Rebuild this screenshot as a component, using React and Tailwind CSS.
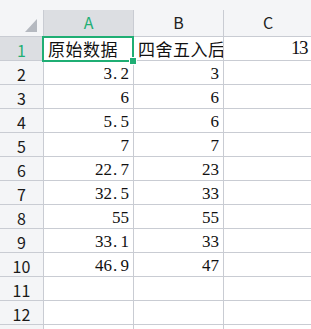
import React from "react";

function Num({ v }) {
  const chars = String(v).split("");
  return (
    <span className="whitespace-nowrap">
      {chars.map((c, i) =>
        c === "." ? (
          <span key={i} className="inline-block w-[8.5px] pl-[1px] text-left">.</span>
        ) : (
          <span key={i}>{c}</span>
        )
      )}
    </span>
  );
}

const rows = [
  ["原始数据", "四舍五入后", "13"],
  ["3.2", "3", ""],
  ["6", "6", ""],
  ["5.5", "6", ""],
  ["7", "7", ""],
  ["22.7", "23", ""],
  ["32.5", "33", ""],
  ["55", "55", ""],
  ["33.1", "33", ""],
  ["46.9", "47", ""],
  ["", "", ""],
  ["", "", ""],
  ["", "", ""],
];

const headFont = { fontFamily: '"Noto Sans CJK SC", "Noto Sans", sans-serif' };
const cellFont = { fontFamily: '"Liberation Serif", "Noto Sans CJK SC", serif' };

export default function App() {
  return (
    <div className="relative w-[311px] h-[329px] overflow-hidden bg-white">
      <div className="h-[10px] bg-[#f4f5f7]" />
      <div className="grid grid-cols-[44px_90px_90px_89px] w-[313px]">
        {/* header row */}
        <div className="h-[27px] bg-[#f4f5f7] border-r border-b border-[#c9ccd3] flex justify-end items-end pr-[6px] pb-[4px]">
          <svg width="12" height="13" viewBox="0 0 12 13">
            <polygon points="12,0 12,13 0,13" fill="#b5b9c0" />
          </svg>
        </div>
        {["A", "B", "C"].map((h, i) => (
          <div
            key={h}
            style={headFont}
            className={`h-[27px] border-r border-b border-[#c9ccd3] flex items-center justify-center text-[16px] leading-[16px] pb-[3px] ${
              i === 0 ? "bg-[#dcdee2] text-[#1fae74]" : "bg-[#f4f5f7] text-[#222]"
            }`}
          >
            {h}
          </div>
        ))}

        {rows.map((r, ri) => (
          <React.Fragment key={ri}>
            <div
              style={headFont}
              className={`h-[24px] border-r border-b border-[#c9ccd3] flex items-end justify-center text-[16px] leading-[16px] pb-[2px] ${
                ri === 0 ? "bg-[#dcdee2] text-[#1fae74]" : "bg-[#f4f5f7] text-[#1a1a1a]"
              }`}
            >
              {ri < 12 ? ri + 1 : null}
            </div>
            {r.map((v, ci) => {
              const isText = ri === 0 && ci < 2;
              const isBig = ri === 0 && ci === 2;
              return (
                <div
                  key={ci}
                  style={isText ? headFont : cellFont}
                  className={`h-[24px] border-r border-b border-[#c9ccd3] overflow-hidden flex items-end text-[#111] ${
                    isText
                      ? "justify-start pl-[4px] pb-[3px] tracking-[0.5px] text-[17px] leading-[17px]"
                      : isBig
                      ? "justify-end pr-[5px] pb-[3px] tracking-[-1.5px] text-[19px] leading-[19px]"
                      : "justify-end pr-[4px] pb-[2px] text-[17px] leading-[17px]"
                  }`}
                >
                  {isText ? <span className="whitespace-nowrap">{v}</span> : v ? <Num v={v} /> : null}
                </div>
              );
            })}
          </React.Fragment>
        ))}
      </div>

      {/* selection */}
      <div className="absolute left-[42px] top-[36px] w-[92px] h-[26px] border-2 border-[#1fae74]" />
      <div className="absolute left-[129px] top-[57px] w-[8px] h-[8px] bg-[#1fae74] border border-white" />
    </div>
  );
}
